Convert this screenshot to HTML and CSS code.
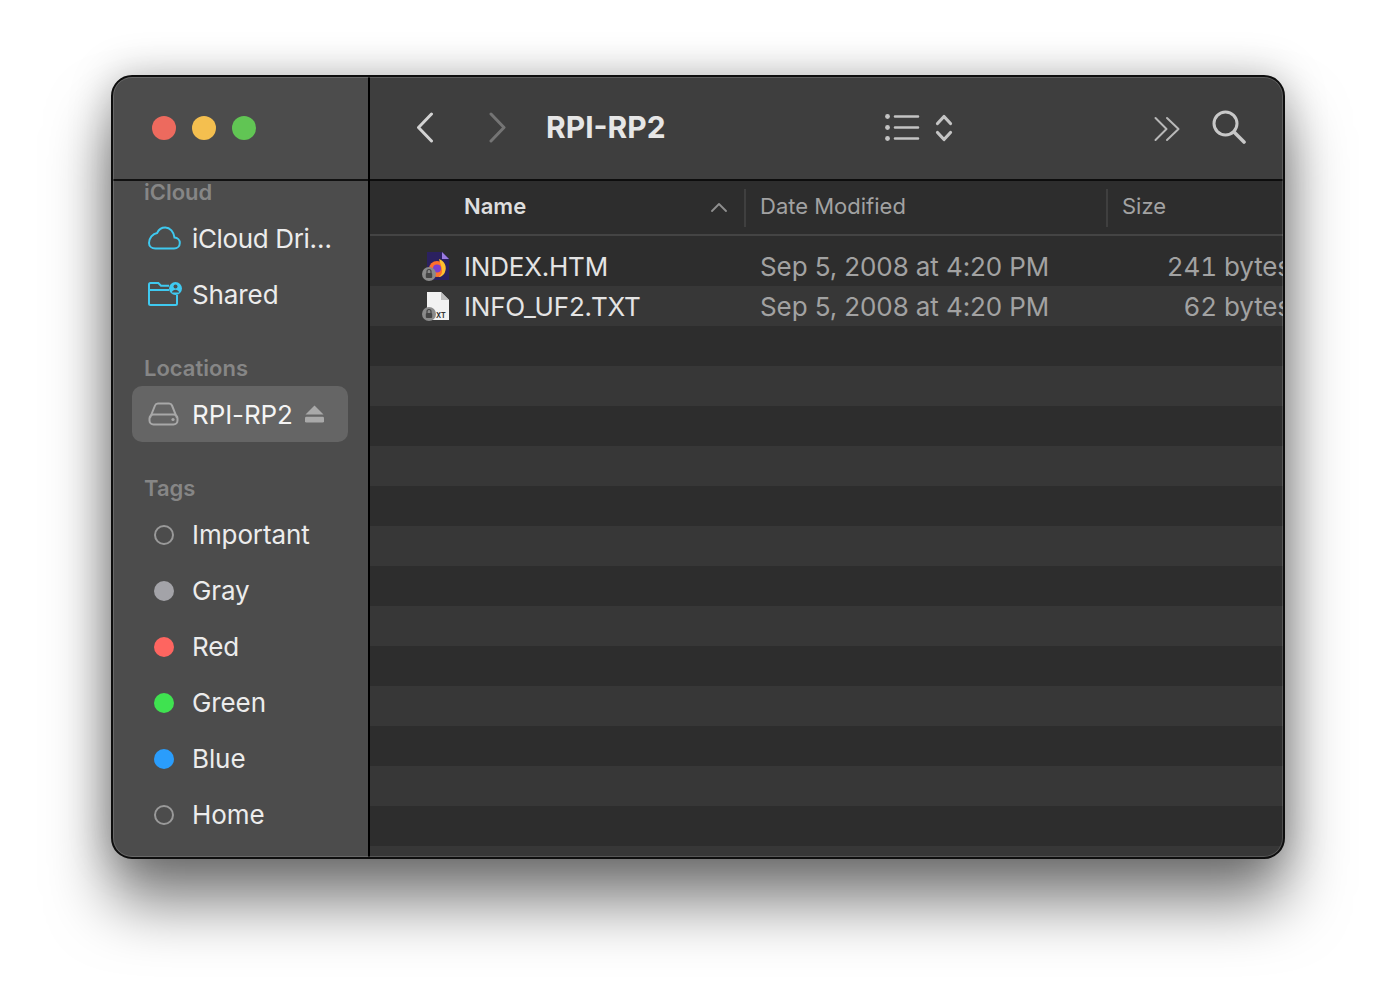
FILE: index.html
```html
<!DOCTYPE html>
<html lang="en">
<head>
  <meta charset="UTF-8">
  <title>RPI-RP2</title>
  <link rel="stylesheet" href="styles.css">
</head>
<body>
  <div class="window">
    <aside class="sidebar">
      <div class="traffic">
        <span class="dot red"></span>
        <span class="dot yellow"></span>
        <span class="dot green"></span>
      </div>
      <div class="side-list">
        <div class="side-head first">iCloud</div>
        <div class="side-item">
          <svg class="side-icon" viewBox="0 0 34 24" fill="none" stroke="#3fc9f0" stroke-width="2"><path d="M7.500 22.500h18.500c3.400 0 5.800-2.500 5.800-5.500 0-3-2.300-5.200-5.300-5.400C25.800 5.700 22 1.500 17.300 1.500c-3.800 0-6.700 2.200-8.100 5.400C4.700 7.500 1 12.200 1 17c0 3 2.500 5.500 6.500 5.500z"/></svg>
          <span class="truncated">iCloud Dri…</span>
        </div>
        <div class="side-item">
          <svg class="side-icon" viewBox="0 0 34 24" fill="none" stroke="#3fc9f0" stroke-width="2"><path d="M1 8V2.500C1 1.700 1.700 1 2.500 1h7.800l2.700 2.700h8M1 8h20M1 8v13.500c0 .8.700 1.500 1.500 1.500h25c.8 0 1.500-.7 1.500-1.500V13"/><circle cx="27.500" cy="6.500" r="6.500" fill="#3fc9f0" stroke="none"/><circle cx="27.500" cy="4.600" r="2" fill="#4c4c4c" stroke="none"/><path d="M23.800 10.500c.6-2 2-2.800 3.700-2.800s3.100.8 3.700 2.800z" fill="#4c4c4c" stroke="none"/></svg>
          <span>Shared</span>
        </div>
        <div class="side-head">Locations</div>
        <div class="side-item selected">
          <svg class="side-icon" viewBox="0 0 34 24" fill="none" stroke="#a8a8a8" stroke-width="2"><path d="M2 16 7 3.500C7.500 2.300 8.500 1.500 10 1.500h11c1.500 0 2.500.8 3 2L29 16"/><rect x="1.500" y="12.500" width="28" height="10" rx="4"/><circle cx="25" cy="17.500" r="1.600" fill="#a8a8a8" stroke="none"/></svg>
          <span>RPI-RP2</span>
          <svg class="eject" viewBox="0 0 20 18" fill="#a9a9a9"><path d="M10 0 19.500 9.500H.5z"/><rect y="12" width="20" height="6" rx="1.500"/></svg>
        </div>
        <div class="side-head">Tags</div>
        <div class="side-item"><span class="tag hollow"></span><span>Important</span></div>
        <div class="side-item"><span class="tag gray"></span><span>Gray</span></div>
        <div class="side-item"><span class="tag tag-red"></span><span>Red</span></div>
        <div class="side-item"><span class="tag tag-green"></span><span>Green</span></div>
        <div class="side-item"><span class="tag tag-blue"></span><span>Blue</span></div>
        <div class="side-item"><span class="tag hollow"></span><span>Home</span></div>
      </div>
    </aside>

    <main class="content">
      <header class="toolbar">
        <svg class="nav-icon back" viewBox="0 0 20 32" fill="none" stroke="#d2d2d2" stroke-width="3" stroke-linecap="round" stroke-linejoin="round"><path d="M15.500 2 2.500 15.500l13 13.500"/></svg>
        <svg class="nav-icon forward" viewBox="0 0 20 32" fill="none" stroke="#747474" stroke-width="3" stroke-linecap="round" stroke-linejoin="round"><path d="m3 2 13 13.500L3 29"/></svg>
        <h1 class="title">RPI-RP2</h1>
        <svg class="view-icon" viewBox="0 0 68 30" fill="none" stroke="#c4c4c4" stroke-width="2.600" stroke-linecap="round" stroke-linejoin="round"><path d="M10 3.500h23M10 14.500h23M10 25.500h23"/><g fill="#c4c4c4" stroke="none"><circle cx="2.500" cy="3.500" r="2.400"/><circle cx="2.500" cy="14.500" r="2.400"/><circle cx="2.500" cy="25.500" r="2.400"/></g><path d="m52.500 10.500 6.500-7 6.500 7M52.500 19.500l6.500 7 6.500-7" stroke-width="3.200"/></svg>
        <svg class="more-icon" viewBox="0 0 26 26" fill="none" stroke="#b8b8b8" stroke-width="2" stroke-linecap="round" stroke-linejoin="round"><path d="m1.500 2 11 11-11 11M13 2l11.500 11L13 24"/></svg>
        <svg class="search-icon" viewBox="0 0 34 34" fill="none" stroke="#c8c8c8" stroke-width="3" stroke-linecap="round"><circle cx="13.500" cy="13.500" r="11.500"/><path d="m22 22 10 10" stroke-width="3.600"/></svg>
      </header>

      <div class="columns">
        <div class="col col-name">
          <b>Name</b>
          <svg class="sort" viewBox="0 0 16 9" fill="none" stroke="#8f8f8f" stroke-width="1.800" stroke-linecap="round" stroke-linejoin="round"><path d="m1 8 7-7 7 7"/></svg>
        </div>
        <div class="col col-date">Date Modified</div>
        <div class="col col-size">Size</div>
      </div>

      <div class="rows">
        <div class="row dark">
          <svg class="file-icon" viewBox="0 0 30 30">
            <path d="M6 1h15l7 7v21H6z" fill="#2b2160"/>
            <path d="M21 1l7 7h-7z" fill="#9a7ae0"/>
            <circle cx="16" cy="18" r="8" fill="#ff6f2c"/>
            <path d="M18 8c6 2 8 8 6 13-1 3-4 5.500-8 5 3 0 5-2.500 5-6 0-4-2-8-3-12z" fill="#ffc02e"/>
            <circle cx="16" cy="17.500" r="4" fill="#7a3fd0"/>
            <circle cx="8" cy="23" r="7" fill="#8a8a8a"/>
            <rect x="4.800" y="22" width="6.400" height="5" rx="1" fill="#444"/>
            <path d="M6 22v-1.500a2 2 0 0 1 4 0V22" fill="none" stroke="#444" stroke-width="1.200"/>
          </svg>
          <span class="cell-name">INDEX.HTM</span>
          <span class="cell-date">Sep 5, 2008 at 4:20 PM</span>
          <span class="cell-size">241 bytes</span>
        </div>
        <div class="row light">
          <svg class="file-icon" viewBox="0 0 30 30">
            <path d="M6 1h14l8 8v20H6z" fill="#f2f2f2"/>
            <path d="M20 1l8 8h-8z" fill="#bdbdbd"/>
            <text x="15" y="27" class="file-ext">XT</text>
            <circle cx="8" cy="23" r="7" fill="#8a8a8a"/>
            <rect x="4.800" y="22" width="6.400" height="5" rx="1" fill="#444"/>
            <path d="M6 22v-1.500a2 2 0 0 1 4 0V22" fill="none" stroke="#444" stroke-width="1.200"/>
          </svg>
          <span class="cell-name">INFO_UF2.TXT</span>
          <span class="cell-date">Sep 5, 2008 at 4:20 PM</span>
          <span class="cell-size">62 bytes</span>
        </div>
        <div class="row dark"></div><div class="row light"></div>
        <div class="row dark"></div><div class="row light"></div>
        <div class="row dark"></div><div class="row light"></div>
        <div class="row dark"></div><div class="row light"></div>
        <div class="row dark"></div><div class="row light"></div>
        <div class="row dark"></div><div class="row light"></div>
        <div class="row dark"></div><div class="row light"></div>
      </div>
    </main>
  </div>
</body>
</html>
```

FILE: styles.css
```css
* {
  box-sizing: border-box;
}

body {
  margin: 0;
  height: 1006px;
  padding: 75px 111px 0;
  background: #fff;
  font-family: Inter, "Liberation Sans", sans-serif;
  overflow: hidden;
}

.window {
  position: relative;
  display: flex;
  width: 1174px;
  height: 784px;
  border-radius: 21px;
  overflow: hidden;
  background: #2d2d2d;
  border: 2px solid #0e0e0e;
  box-shadow: 0 44px 62px rgba(0, 0, 0, 0.5), 0 0 42px rgba(0, 0, 0, 0.26);
}

/* thin light rim on top of the panes */
.window::after {
  content: "";
  position: absolute;
  inset: 0;
  border-radius: 19px;
  border: 1px solid rgba(255, 255, 255, 0.16);
  pointer-events: none;
}

/* sidebar */
.sidebar {
  width: 257px;
  flex-shrink: 0;
  background: #4c4c4c;
  border-right: 2px solid #000;
  display: flex;
  flex-direction: column;
}

.traffic {
  height: 104px;
  flex-shrink: 0;
  display: flex;
  align-items: center;
  gap: 16px;
  padding-left: 39px;
  border-bottom: 2px solid #111;
}

.dot {
  width: 24px;
  height: 24px;
  border-radius: 50%;
}

.red { background: #ed6a5e; }
.yellow { background: #f4bf4f; }
.green { background: #61c554; }

.side-list {
  padding: 0 19px;
}

.side-head {
  margin: 28px 0 0 12px;
  height: 36px;
  display: flex;
  align-items: center;
  font-size: 22px;
  font-weight: 600;
  color: #868686;
}

.side-head.first {
  margin-top: -7px;
}

.side-item {
  height: 56px;
  display: flex;
  align-items: center;
  padding-left: 16px;
  font-size: 26px;
  letter-spacing: -0.1px;
  color: #ececec;
  white-space: nowrap;
}

.truncated {
  letter-spacing: -0.35px;
}

.side-item.selected {
  width: 216px;
  background: #656565;
  border-radius: 10px;
  color: #f4f4f4;
}

.side-icon {
  width: 34px;
  height: 24px;
  margin-right: 10px;
}

.eject {
  width: 19px;
  height: 18px;
  margin-left: 12px;
}

.tag {
  width: 20px;
  height: 20px;
  border-radius: 50%;
  margin: 2px 18px 0 6px;
}

.hollow { border: 2px solid #999; }
.gray { background: #a3a3a8; }
.tag-red { background: #fe6560; }
.tag-green { background: #3fe250; }
.tag-blue { background: #2a9dfc; }

/* main area */
.content {
  flex: 1;
  min-width: 0;
  display: flex;
  flex-direction: column;
}

.toolbar {
  height: 104px;
  flex-shrink: 0;
  display: flex;
  align-items: center;
  background: #3e3e3e;
  border-bottom: 2px solid #0d0d0d;
  padding-left: 46px;
}

.nav-icon {
  width: 20px;
  height: 32px;
}

.forward {
  margin-left: 52px;
}

.title {
  margin: 0 0 2px 38px;
  width: 339px;
  font-size: 30px;
  font-weight: 700;
  color: #e6e6e6;
}

.view-icon {
  width: 68px;
  height: 30px;
}

.more-icon {
  width: 26px;
  height: 26px;
  margin-left: 201px;
  margin-top: 2px;
}

.search-icon {
  width: 34px;
  height: 34px;
  margin-left: 32px;
  margin-top: -2px;
}

.columns {
  height: 55px;
  flex-shrink: 0;
  display: flex;
  align-items: center;
  background: #2d2d2d;
  border-bottom: 2px solid #444;
  font-size: 22px;
  color: #a2a2a2;
}

.col {
  height: 38px;
  padding-bottom: 4px;
  display: flex;
  align-items: center;
}

.col-name {
  width: 376px;
  padding-left: 94px;
  justify-content: space-between;
  padding-right: 17px;
  border-right: 2px solid #3f3f3f;
  color: #dedede;
}

.col-name b {
  font-weight: 600;
}

.sort {
  width: 16px;
  height: 9px;
  margin-top: 4px;
}

.col-date {
  width: 362px;
  padding-left: 14px;
  border-right: 2px solid #3f3f3f;
}

.col-size {
  padding-left: 14px;
}

.rows {
  flex: 1;
  padding-top: 10px;
  overflow: hidden;
}

.row {
  height: 40px;
  display: flex;
  align-items: center;
  font-size: 26px;
  letter-spacing: -0.1px;
  white-space: nowrap;
}

.row.dark { background: #2d2d2d; }
.row.light { background: #373737; }

.file-icon {
  width: 30px;
  height: 30px;
  flex-shrink: 0;
  margin: 0 13px 0 51px;
}

.file-ext {
  font-size: 7px;
  font-weight: 700;
  letter-spacing: 0;
  fill: #333;
}

.cell-name {
  width: 296px;
  flex-shrink: 0;
  letter-spacing: -0.2px;
  color: #e4e4e4;
}

.cell-date {
  width: 388px;
  flex-shrink: 0;
  color: #a2a2a2;
}

.cell-size {
  width: 143px;
  flex-shrink: 0;
  text-align: right;
  font-feature-settings: "tnum";
  color: #a2a2a2;
}
```
